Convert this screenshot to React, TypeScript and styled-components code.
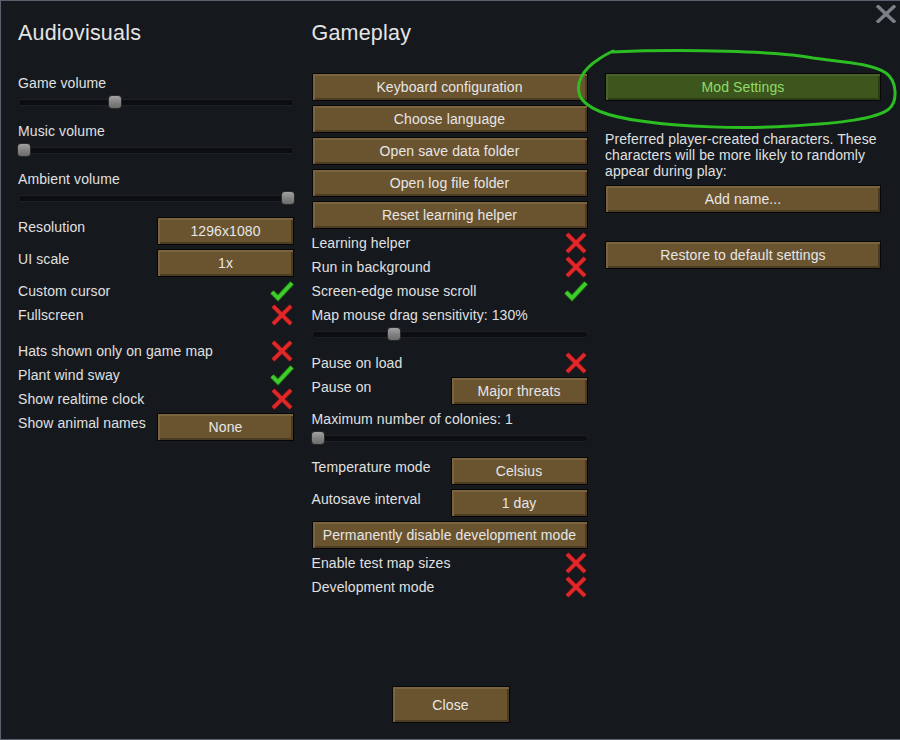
import React from "react";
import styled, { createGlobalStyle } from "styled-components";

const Global = createGlobalStyle`
  html, body { margin: 0; padding: 0; background: #15181d; }
  body { font-family: "Liberation Sans", Arial, sans-serif; }
  * { box-sizing: border-box; }
`;

const Window = styled.div`
  position: relative;
  width: 900px;
  height: 740px;
  background: #15181d;
  border-left: 1px solid #58616d;
  border-top: 1px solid #58616d;
  border-bottom: 1px solid #58616d;
  display: flex;
  flex-direction: column;
  color: #e0e0e0;
  font-size: 14px;
  letter-spacing: 0.1px;
  overflow: hidden;
`;

const Columns = styled.div`
  display: grid;
  grid-template-columns: 276px 276px 276px;
  column-gap: 17.5px;
  padding: 17px 0 0 17px;
`;

const Column = styled.div`
  display: flex;
  flex-direction: column;
`;

const Heading = styled.div`
  height: 30px;
  line-height: 30px;
  font-size: 21.5px;
  letter-spacing: 0.2px;
  color: #e4e4e4;
  margin-bottom: 23px;
`;

const Label = styled.div`
  line-height: 24px;
  height: 24px;
  white-space: nowrap;
`;

const SliderGroup = styled.div`
  display: flex;
  flex-direction: column;
  margin-bottom: 10px;
`;

const Track = styled.div`
  position: relative;
  height: 14px;
  display: flex;
  align-items: center;
`;

const TrackBar = styled.div`
  width: 100%;
  height: 7px;
  border-radius: 4px;
  background: #0b0d10;
  box-shadow: inset 0 0 0 1px #1d2126;
`;

const Thumb = styled.div`
  position: absolute;
  top: 1px;
  width: 12px;
  height: 12px;
  margin-left: -6px;
  border-radius: 3px;
  background: linear-gradient(#a3a3a3, #808080 55%, #6c6c6c);
  box-shadow: 0 0 0 1px #2a2a2a;
`;

const ToggleRow = styled.div`
  height: 24px;
  display: flex;
  align-items: center;
  justify-content: space-between;
`;

const ButtonRow = styled.div`
  height: 32px;
  display: flex;
  justify-content: space-between;
  align-items: flex-start;
`;

const Button = styled.div<{ $wide?: boolean; $green?: boolean; $h?: number; $w?: number }>`
  width: ${(p) => (p.$wide ? "100%" : `${p.$w ?? 137}px`)};
  height: ${(p) => p.$h ?? 28}px;
  margin-top: 2px;
  display: flex;
  align-items: center;
  justify-content: center;
  white-space: nowrap;
  border: 1px solid #070707;
  background: ${(p) => (p.$green ? "#3d561e" : "#6a5430")};
  color: ${(p) => (p.$green ? "#8edc68" : "#e6e6e6")};
  box-shadow: ${(p) =>
    p.$green
      ? "inset 2px 2px 0 #48632a, inset -2px -2px 0 #2b3d15"
      : "inset 2px 2px 0 #7a6440, inset -2px -2px 0 #4b3b21"};
  font-size: 14px;
`;

const Paragraph = styled.div`
  margin-top: 28px;
  line-height: 16px;
  color: #e0e0e0;
`;

const Gap = styled.div<{ $h: number }>`
  height: ${(p) => p.$h}px;
`;

const Footer = styled.div`
  margin-top: auto;
  padding-bottom: 16px;
  display: flex;
  justify-content: center;
`;

const CloseIcon = styled.svg`
  position: absolute;
  top: 4px;
  right: 4px;
`;

const Annotation = styled.svg`
  position: absolute;
  left: 0;
  top: 0;
  pointer-events: none;
`;

const Check = () => (
  <svg width="24" height="22" viewBox="0 0 24 22">
    <polyline points="2,12 8,18 22,3" fill="none" stroke="#1b5c13" strokeWidth="5.5" />
    <polyline points="2,12 8,18 22,3" fill="none" stroke="#3fcd2c" strokeWidth="3.8" />
  </svg>
);

const Cross = () => (
  <svg width="24" height="22" viewBox="0 0 24 22">
    <g stroke="#6b1414" strokeWidth="5.2">
      <line x1="3" y1="2" x2="21" y2="20" />
      <line x1="21" y1="2" x2="3" y2="20" />
    </g>
    <g stroke="#e0282a" strokeWidth="3.6">
      <line x1="3" y1="2" x2="21" y2="20" />
      <line x1="21" y1="2" x2="3" y2="20" />
    </g>
  </svg>
);

const Toggle = ({ label, on }: { label: string; on: boolean }) => (
  <ToggleRow>
    <Label>{label}</Label>
    {on ? <Check /> : <Cross />}
  </ToggleRow>
);

const Slider = ({ label, value }: { label: string; value: number }) => (
  <SliderGroup>
    <Label>{label}</Label>
    <Track>
      <TrackBar />
      <Thumb style={{ left: `calc(6px + ${value} * (100% - 12px))` }} />
    </Track>
  </SliderGroup>
);

const Picker = ({ label, value }: { label: string; value: string }) => (
  <ButtonRow>
    <Label>{label}</Label>
    <Button>{value}</Button>
  </ButtonRow>
);

const FullButton = ({ children, green }: { children: React.ReactNode; green?: boolean }) => (
  <ButtonRow>
    <Button $wide $green={green}>{children}</Button>
  </ButtonRow>
);

export default function App() {
  return (
    <>
      <Global />
      <Window>
        <Columns>
          <Column>
            <Heading>Audiovisuals</Heading>
            <Slider label="Game volume" value={0.345} />
            <Slider label="Music volume" value={0} />
            <Slider label="Ambient volume" value={1} />
            <Picker label="Resolution" value="1296x1080" />
            <Picker label="UI scale" value="1x" />
            <Toggle label="Custom cursor" on />
            <Toggle label="Fullscreen" on={false} />
            <Gap $h={12} />
            <Toggle label="Hats shown only on game map" on={false} />
            <Toggle label="Plant wind sway" on />
            <Toggle label="Show realtime clock" on={false} />
            <Picker label="Show animal names" value="None" />
          </Column>
          <Column>
            <Heading>Gameplay</Heading>
            <FullButton>Keyboard configuration</FullButton>
            <FullButton>Choose language</FullButton>
            <FullButton>Open save data folder</FullButton>
            <FullButton>Open log file folder</FullButton>
            <FullButton>Reset learning helper</FullButton>
            <Toggle label="Learning helper" on={false} />
            <Toggle label="Run in background" on={false} />
            <Toggle label="Screen-edge mouse scroll" on />
            <Slider label="Map mouse drag sensitivity: 130%" value={0.29} />
            <Toggle label="Pause on load" on={false} />
            <Picker label="Pause on" value="Major threats" />
            <Slider label="Maximum number of colonies: 1" value={0} />
            <Picker label="Temperature mode" value="Celsius" />
            <Picker label="Autosave interval" value="1 day" />
            <FullButton>Permanently disable development mode</FullButton>
            <Toggle label="Enable test map sizes" on={false} />
            <Toggle label="Development mode" on={false} />
          </Column>
          <Column>
            <Heading />
            <FullButton green>Mod Settings</FullButton>
            <Paragraph>
              Preferred player-created characters. These characters will be more likely to randomly
              appear during play:
            </Paragraph>
            <Gap $h={4} />
            <FullButton>Add name...</FullButton>
            <Gap $h={24} />
            <FullButton>Restore to default settings</FullButton>
          </Column>
        </Columns>
        <Footer>
          <Button $w={118} $h={37}>Close</Button>
        </Footer>
        <CloseIcon width="20" height="18" viewBox="0 0 20 18">
          <g stroke="#7b8086" strokeWidth="3.4">
            <line x1="1" y1="0.5" x2="19" y2="17.5" />
            <line x1="19" y1="0.5" x2="1" y2="17.5" />
          </g>
        </CloseIcon>
        <Annotation width="900" height="740" viewBox="0 0 900 740">
          <path
            d="M610,51 C680,48 780,50 812,57 C840,61 870,62 885,72 C896,80 897,100 888,108 C875,118 840,122 790,125 C740,128 680,126 640,120 C610,116 585,108 579,95 C574,82 582,68 598,58 C602,55 606,53 612,50"
            fill="none"
            stroke="#2bbd22"
            strokeWidth="3"
            strokeLinecap="round"
          />
        </Annotation>
      </Window>
    </>
  );
}
